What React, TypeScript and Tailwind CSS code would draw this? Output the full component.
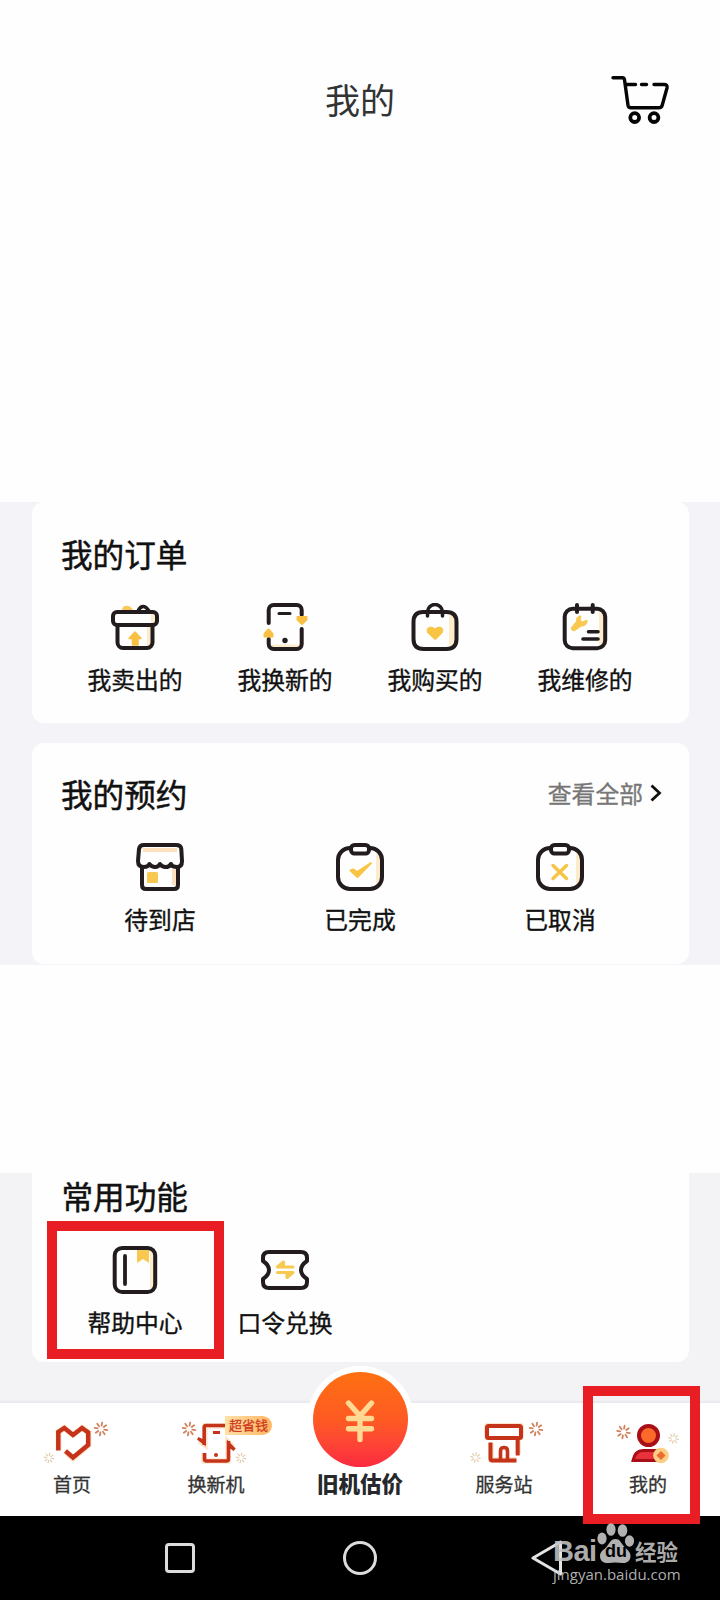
import * as React from "react";

type IconProps = { children: React.ReactNode };

/* 48px icon with a dark outline */
const LineIcon: React.FC<IconProps> = ({ children }) => (
  <svg
    width="48"
    height="48"
    viewBox="0 0 48 48"
    fill="none"
    stroke="#231c1e"
    strokeWidth="4"
    strokeLinecap="round"
    strokeLinejoin="round"
    className="block"
  >
    {children}
  </svg>
);

const SoldIcon = () => (
  <LineIcon>
    <path d="M11 7c0-5 8-6 11 0z" fill="#f9c85a" stroke="none" />
    <path d="M36 24h5v19h-5zM40 9h5v12h-5z" fill="#fdeccb" stroke="none" />
    <path d="M27 8c3-6 7-6 11 0" strokeWidth="3.5" />
    <rect x="2" y="9" width="44" height="13" rx="4" />
    <path d="M6.500 22v17.500a5.500 5.500 0 0 0 5.500 5.500h24a5.500 5.500 0 0 0 5.500-5.500V22" />
    <path d="M24 29l6 6.500h-3V42h-5.500v-6.500H18z" fill="#f8bf42" stroke="#f8bf42" strokeWidth="1.500" />
  </LineIcon>
);

const SwapIcon = () => (
  <LineIcon>
    <path d="M12 43h26" stroke="#fdeccb" strokeWidth="3" />
    <path d="M7.700 20V7a5 5 0 0 1 5-5h23a5 5 0 0 1 5 5v5" />
    <path d="M40.700 26v15a5 5 0 0 1-5 5h-23a5 5 0 0 1-5-5v-5" />
    <path d="M18 10.500h11" strokeWidth="3" />
    <circle cx="24" cy="37.500" r="2.700" fill="#231c1e" stroke="none" />
    <path d="M7.500 26.500l4 4.500v2.500h-8V31zM41 21l-4.500-4.500V14h9v2.500z" fill="#f8bf42" stroke="#f8bf42" strokeWidth="2" />
  </LineIcon>
);

const BagIcon = () => (
  <LineIcon>
    <path d="M38 12h6v28l-6 4z" fill="#fdeccb" stroke="none" />
    <path d="M12 9h23.500q10 0 10 10v17q0 10-10 10H12.500q-10 0-10-10V19q0-10 9.500-10z" />
    <path d="M16.500 13V9a7.500 7.500 0 0 1 15 0v4" strokeWidth="3.500" />
    <path d="M24 36.500l-7-6.500c-3-5 2.500-8 7-4 4.500-4 10-1 7 4z" fill="#f8c443" stroke="#f8c443" strokeWidth="1" />
  </LineIcon>
);

const RepairIcon = () => (
  <LineIcon>
    <path d="M38 8h5v34h-5z" fill="#fdeccb" stroke="none" />
    <rect x="3.700" y="5.700" width="40.500" height="39.500" rx="8" />
    <path d="M16 2v7M31.700 2v7" />
    <path
      d="M10.500 24.500l5-6c-.5-3 1-5.500 4.500-5.500l-1 4 2.500 2 4.500-2c.5 4-2.500 6.500-6 6l-6 4.500q-4 1-3.500-3z"
      fill="#f8c850"
      stroke="#f8c850"
      strokeWidth="1"
    />
    <path d="M27.500 28.700h9.500M22 36h15" strokeWidth="3.600" />
  </LineIcon>
);

const ShopIcon = () => (
  <LineIcon>
    <path d="M7 5h34v4H7zM36 26h5v16h-5z" fill="#fde0bd" stroke="none" />
    <path d="M8 2h32q5 0 5.300 4l.7 12q0 6-5 6-5 0-6-3-2.500 3.500-6 3t-5-3q-2 3.500-5.500 3t-5-3Q12 24 8 24 2 24 2 18L3 6q.5-4 5-4z" />
    <path d="M6 25v17q0 4 4 4h28q4 0 4-4V25" />
    <rect x="11" y="29" width="11" height="11" rx="1.500" fill="#f8c850" stroke="none" />
  </LineIcon>
);

const Clipboard: React.FC<IconProps> = ({ children }) => (
  <LineIcon>
    <path d="M40 10l4 4v24l-4 4z" fill="#fdeccb" stroke="none" />
    <rect x="2" y="5" width="44" height="41" rx="12" />
    <rect x="15" y="2" width="18" height="8.500" rx="3.500" fill="#fff" />
    {children}
  </LineIcon>
);

const DoneIcon = () => (
  <Clipboard>
    <path d="M14.500 27.500l3-1 3.500 2.500L35 20 21.500 34z" fill="#f8c443" stroke="#f8c443" strokeWidth="2" />
  </Clipboard>
);

const CancelIcon = () => (
  <Clipboard>
    <path d="M17 22.500L30.500 35.500M30.500 22.500L17 35.500" stroke="#f8c443" strokeWidth="3.400" />
  </Clipboard>
);

const HelpIcon = () => (
  <LineIcon>
    <path d="M39 5h5v37h-5z" fill="#fdeccb" stroke="none" />
    <path d="M26 3h12v14l-6-4-6 4z" fill="#f8c850" stroke="none" />
    <rect x="3.700" y="2" width="40.500" height="44" rx="7.500" />
    <path d="M14 10v28" strokeWidth="3.800" />
  </LineIcon>
);

const CodeIcon = () => (
  <LineIcon>
    <path d="M8 6h32q6 0 6 6v3q-6 4-6 9t6 9v3q0 6-6 6H8q-6 0-6-6v-3q6-4 6-9t-6-9v-3q0-6 6-6z" />
    <path
      d="M16.500 21H32M16.500 21l6-5v4zM32 26.500H16.500M32 26.500l-6 5v-4z"
      fill="#f8c850"
      stroke="#f8c850"
      strokeWidth="3"
    />
  </LineIcon>
);

const Burst = ({ x, y, r, faint }: { x: number; y: number; r: number; faint?: boolean }) => (
  <g
    transform={`translate(${x} ${y})`}
    stroke={faint ? "#e6cfb0" : "#d0825c"}
    strokeWidth={faint ? 1.3 : 1.8}
    strokeLinecap="round"
  >
    {[10, 55, 100, 145, 190, 235, 280, 325].map((a) => (
      <path key={a} d={`M${r * 0.42} 0H${r * 0.8}`} transform={`rotate(${a})`} />
    ))}
  </g>
);

const TabIcon: React.FC<IconProps> = ({ children }) => (
  <svg width="84" height="48" viewBox="0 0 84 48" fill="none" stroke="#c5341a" strokeWidth="4" className="block">
    {children}
  </svg>
);

const HomeTabIcon = () => (
  <TabIcon>
    <path d="M28.500 33V15l6-4 8.500 7 9-7 6.500 4.500V28L43 41.500 35 34" stroke="#fde6cf" strokeWidth="6" />
    <path d="M28.300 33.500V15l6-4 8.700 7 9-7 6.200 4.500V28L43 40.500 35.500 34" strokeWidth="4.500" />
    <Burst x={71} y={12} r={8} />
    <Burst x={19} y={41} r={6} faint />
  </TabIcon>
);

const SwapTabIcon = () => (
  <TabIcon>
    <path d="M25 24l6 4V9h20M59 30l-5-5v19H30v-8" stroke="#fde6cf" strokeWidth="5.500" />
    <path d="M51 8.500H32q-1.800 0-1.800 2V28M54.500 24v18q0 2-2 2H32.500q-2 0-2-2v-6" strokeWidth="3.600" />
    <path d="M32 29.500L23 22.500l1.500-2.500 6 3zM52.700 22.500l9 9-2 2.500-6-4z" fill="#c5341a" stroke="none" />
    <path d="M39 15.500h7" strokeWidth="3" />
    <circle cx="42" cy="38" r="2" fill="#c5341a" stroke="none" />
    <Burst x={15} y={12} r={8} />
    <Burst x={67} y={41} r={6} faint />
  </TabIcon>
);

const ServiceTabIcon = () => (
  <TabIcon>
    <path d="M25 9h34v11H25zM29 26v17h25M56 21v16" stroke="#fde6cf" strokeWidth="6" strokeLinejoin="round" />
    <rect x="25" y="9" width="34" height="12" rx="1.500" strokeWidth="4" fill="#fff" />
    <path d="M28.500 25.500v16q0 2 2 2H54.500M55.700 21v17.500" strokeWidth="4" />
    <path d="M38.500 43v-9q0-3.500 3.500-3.500t3.500 3.500v9" strokeWidth="3.600" />
    <Burst x={74} y={12} r={8} />
    <Burst x={13.5} y={40.5} r={6} faint />
  </TabIcon>
);

const MineTabIcon = () => (
  <TabIcon>
    <circle cx="42.500" cy="18.500" r="9.500" fill="#fb6a2a" stroke="#a80f16" />
    <path d="M27 43.500q2-10 10-10h18v10z" fill="#e8313c" stroke="#a80f16" strokeWidth="3" />
    <circle cx="55" cy="38.500" r="7.800" fill="#fbcf85" stroke="none" />
    <path d="M55 34l4.500 4.500L55 43l-4.500-4.500z" fill="#ef6a32" stroke="none" />
    <Burst x={17.5} y={15} r={8} />
    <Burst x={67.5} y={21.5} r={6} faint />
  </TabIcon>
);

const Item = ({ icon, label }: { icon: React.ReactNode; label: string }) => (
  <div className="flex flex-col items-center">
    {icon}
    <span className="mt-2.5 text-[23.8px] leading-9 text-[#111] [-webkit-text-stroke:0.35px]">{label}</span>
  </div>
);

const SectionTitle: React.FC<IconProps> = ({ children }) => (
  <h2 className="text-[31.6px] leading-12 text-[#111] [-webkit-text-stroke:0.5px]">{children}</h2>
);

const Tab = ({ icon, label }: { icon: React.ReactNode; label: string }) => (
  <div className="flex flex-col items-center pt-3.5">
    {icon}
    <span className="mt-[5px] text-[19px] leading-7 text-[#333] [-webkit-text-stroke:0.3px]">{label}</span>
  </div>
);

const App: React.FC = () => {
  return (
    <main className="relative flex h-[1600px] w-[720px] flex-col overflow-hidden bg-white font-['Noto_Sans_CJK_SC',sans-serif]">
      {/* Header */}
      <header className="grid h-[502px] grid-cols-3 items-start bg-[#fefefe] pt-[75px]">
        <span />
        <h1 className="-mt-0.5 text-center text-[35px] leading-[52px] text-[#333]">我的</h1>
        <svg
          width="60"
          height="52"
          viewBox="0 0 60 52"
          fill="none"
          stroke="#050505"
          strokeWidth="3.4"
          strokeLinecap="round"
          strokeLinejoin="round"
          className="mr-[50px] justify-self-end"
        >
          <path d="M3 2.700h9.500q1.500 0 2 2l3.500 25.500q.4 2.500 3 2.500h28q2.500 0 3.200-2.500L57 13q.8-3.500-3-3.500H44M16.500 9.500h9M31.500 9.500h5" />
          <circle cx="24.700" cy="42.600" r="4.400" strokeWidth="3.800" />
          <circle cx="44" cy="42.600" r="4.400" strokeWidth="3.800" />
        </svg>
      </header>

      {/* Orders and bookings */}
      <div className="flex h-[463px] flex-col gap-5 bg-[#f3f3f8] pr-[31px] pl-8">
        <section className="h-[221px] rounded-xl bg-[#fefefe] px-[29px] pt-[27px]">
          <SectionTitle>我的订单</SectionTitle>
          <div className="mt-[26px] -ml-px grid w-[600px] grid-cols-4">
            <Item icon={<SoldIcon />} label="我卖出的" />
            <Item icon={<SwapIcon />} label="我换新的" />
            <Item icon={<BagIcon />} label="我购买的" />
            <Item icon={<RepairIcon />} label="我维修的" />
          </div>
        </section>
        <section className="h-[221px] rounded-xl bg-[#fefefe] pr-[27px] pl-[29px] pt-[26px]">
          <div className="flex items-center justify-between">
            <SectionTitle>我的预约</SectionTitle>
            <div className="flex items-center gap-[7px]">
              <span className="text-[23.8px] leading-9 text-[#777] [-webkit-text-stroke:0.3px]">查看全部</span>
              <svg width="12" height="18" viewBox="0 0 12 18" fill="none" stroke="#111" strokeWidth="2.8">
                <path d="M1.500 1.500L9.500 9l-8 7.500" />
              </svg>
            </div>
          </div>
          <div className="mt-[26px] -ml-px grid w-[600px] grid-cols-3">
            <Item icon={<ShopIcon />} label="待到店" />
            <Item icon={<DoneIcon />} label="已完成" />
            <Item icon={<CancelIcon />} label="已取消" />
          </div>
        </section>
      </div>

      <div className="h-[208px] bg-[#fefefe]" />

      {/* Common functions */}
      <div className="h-[230px] bg-[#f3f3f6] pr-[31px] pl-8">
        <section className="h-[191px] rounded-b-xl bg-[#fefefe] px-7">
          <div className="-mt-0.5 pl-[1.5px]">
            <SectionTitle>常用功能</SectionTitle>
          </div>
          <div className="mt-[27px] grid w-[600px] grid-cols-4">
            <Item icon={<HelpIcon />} label="帮助中心" />
            <Item icon={<CodeIcon />} label="口令兑换" />
          </div>
        </section>
      </div>

      {/* Tab bar */}
      <nav className="grid h-[113px] grid-cols-5 bg-white shadow-[0_-1px_3px_#e2e3e6]">
        <Tab icon={<HomeTabIcon />} label="首页" />
        <div className="relative">
          <Tab icon={<SwapTabIcon />} label="换新机" />
          <span className="absolute top-[13px] left-[81px] h-[19px] w-[47px] rounded-l-md rounded-r-full bg-linear-to-r from-[#ffe0a6] to-[#ffb662] text-center text-[13px] leading-[18px] text-[#cf3a1c] [-webkit-text-stroke:0.3px]">
            超省钱
          </span>
        </div>
        <div className="-mt-[37px] flex flex-col items-center">
          <div className="rounded-full bg-white p-1.5">
            <div className="flex size-[95px] items-center justify-center rounded-full bg-linear-to-b from-[#fd7010] via-[#fe5a22] to-[#fc2840]">
              <svg width="94" height="94" viewBox="0 0 94 94" fill="none" stroke="#ffd893" strokeWidth="5.4" strokeLinecap="round">
                <path d="M35.500 30l11.500 13 11.500-13M47 44v22.500M35.500 45.500h23M35.500 55.800h23" />
              </svg>
            </div>
          </div>
          <span className="-mt-1 text-[21.5px] leading-7 font-black text-[#26282c]">旧机估价</span>
        </div>
        <Tab icon={<ServiceTabIcon />} label="服务站" />
        <Tab icon={<MineTabIcon />} label="我的" />
      </nav>

      {/* System navigation */}
      <footer className="grid flex-1 grid-cols-3 items-center justify-items-center bg-black px-[90px]">
        <div className="size-[30px] rounded-sm border-[3px] border-[#dcdcdc]" />
        <div className="size-[34px] rounded-full border-[3px] border-[#dcdcdc]" />
        <svg width="32" height="36" viewBox="0 0 32 36" fill="none" stroke="#e4e4e4" strokeWidth="3" strokeLinejoin="round" className="ml-3.5">
          <path d="M2 18L29.500 2v32z" />
        </svg>
      </footer>

      {/* Highlight frames */}
      <div className="absolute top-[1221px] left-[47px] h-[138px] w-[177px] border-10 border-[#e91d24]" />
      <div className="absolute top-[1386px] left-[583px] h-[138px] w-[117px] border-10 border-[#e91d24]" />

      {/* Watermark */}
      <div className="absolute top-[1523px] left-[553px] w-[130px] text-[#c4c4c4]/90">
        <div className="flex h-[41px] items-end">
          <span className="w-[44px] font-['Liberation_Sans',sans-serif] text-[29px] leading-[26px] font-bold tracking-[-0.5px]">Bai</span>
          <div className="relative h-[41px] w-[38px]">
            <svg width="38" height="41" viewBox="0 0 38 41" fill="currentColor">
              <ellipse cx="5" cy="15.500" rx="4.600" ry="6" />
              <ellipse cx="14" cy="6.500" rx="4.600" ry="6.300" />
              <ellipse cx="25.500" cy="7.500" rx="4.800" ry="6.300" />
              <ellipse cx="32.500" cy="18" rx="4.600" ry="5.700" />
              <path d="M18.500 16c5 0 6 5 9 8s6 5 6 9c0 5-4 7.500-8 7-5-.7-9-.7-14 0-5 .5-8.500-2-8.500-7s4-6 6.500-9 4-8 9-8z" />
            </svg>
            <span className="absolute top-[17px] left-[8px] font-['Liberation_Sans',sans-serif] text-[18px] leading-[22px] font-bold text-black">du</span>
          </div>
          <span className="text-[21.5px] leading-[27px] font-bold">经验</span>
        </div>
        <span className="block font-['Open_Sans',sans-serif] text-[15px] leading-5">jingyan.baidu.com</span>
      </div>
    </main>
  );
};

export default App;
